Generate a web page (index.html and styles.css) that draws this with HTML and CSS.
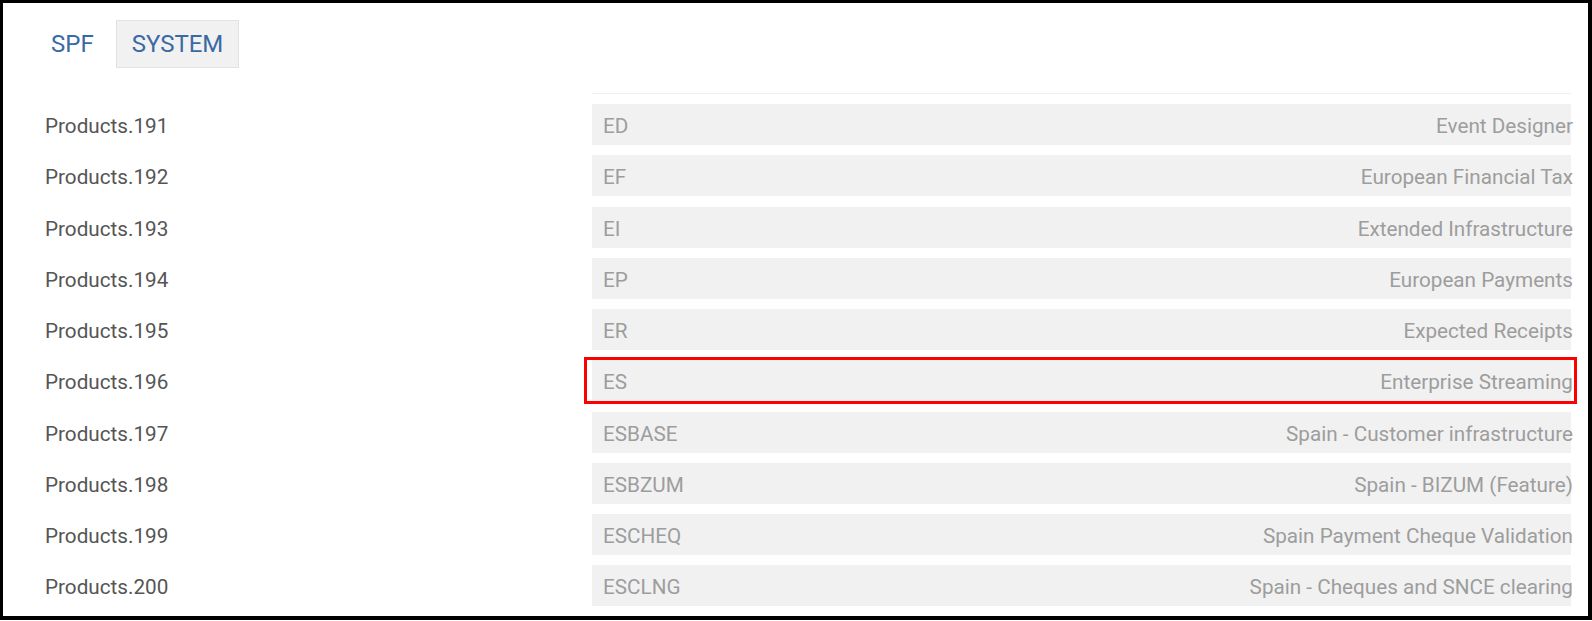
FILE: index.html
```html
<!DOCTYPE html>
<html>
<head>
<meta charset="utf-8">
<link rel="stylesheet" href="styles.css">
</head>
<body>
<div class="frame">
  <div class="header">
    <span class="crumb">SPF</span>
    <span class="crumb-btn">SYSTEM</span>
  </div>
  <div class="table">
    <div class="head-row"><div></div><div class="head-line"></div></div>
    <div class="row"><div class="name">Products.191</div><div class="cell"><span class="code">ED</span><span class="desc">Event Designer</span></div></div>
    <div class="row"><div class="name">Products.192</div><div class="cell"><span class="code">EF</span><span class="desc">European Financial Tax</span></div></div>
    <div class="row"><div class="name">Products.193</div><div class="cell"><span class="code">EI</span><span class="desc">Extended Infrastructure</span></div></div>
    <div class="row"><div class="name">Products.194</div><div class="cell"><span class="code">EP</span><span class="desc">European Payments</span></div></div>
    <div class="row"><div class="name">Products.195</div><div class="cell"><span class="code">ER</span><span class="desc">Expected Receipts</span></div></div>
    <div class="row"><div class="name">Products.196</div><div class="cell highlighted"><span class="code">ES</span><span class="desc">Enterprise Streaming</span></div></div>
    <div class="row"><div class="name">Products.197</div><div class="cell"><span class="code">ESBASE</span><span class="desc">Spain - Customer infrastructure</span></div></div>
    <div class="row"><div class="name">Products.198</div><div class="cell"><span class="code">ESBZUM</span><span class="desc">Spain - BIZUM (Feature)</span></div></div>
    <div class="row"><div class="name">Products.199</div><div class="cell"><span class="code">ESCHEQ</span><span class="desc">Spain Payment Cheque Validation</span></div></div>
    <div class="row"><div class="name">Products.200</div><div class="cell"><span class="code">ESCLNG</span><span class="desc">Spain - Cheques and SNCE clearing</span></div></div>
  </div>
</div>
</body>
</html>
```
FILE: styles.css
```css
html, body {
  margin: 0;
  padding: 0;
  background: #ffffff;
}
body {
  font-family: Roboto, "Liberation Sans", sans-serif;
}
.frame {
  box-sizing: border-box;
  width: 1592px;
  height: 620px;
  border-style: solid;
  border-color: #000;
  border-width: 3px 4px 4px 3px;
  padding: 17px 0 0 0;
  overflow: hidden;
}
.header {
  display: flex;
  align-items: center;
  gap: 22px;
  padding-left: 48px;
  height: 48px;
}
.crumb {
  color: #3a6aa3;
  font-size: 24px;
  line-height: 28px;
}
.crumb-btn {
  box-sizing: border-box;
  color: #3a6aa3;
  font-size: 24px;
  line-height: 28px;
  padding: 9px 15px;
  height: 48px;
  background: #f1f1f1;
  border: 1px solid #e2e2e2;
}
.table {
  padding-left: 42px;
  margin-top: 25px;
}
.head-row {
  display: grid;
  grid-template-columns: 547px 979px;
  margin-bottom: 10px;
}
.head-line {
  height: 1px;
  background: #eeeeee;
}
.row {
  display: grid;
  grid-template-columns: 547px 979px;
  height: 41px;
  margin-bottom: 10.25px;
}
.name {
  box-sizing: border-box;
  padding-top: 4px;
  line-height: 37px;
  font-size: 20.7px;
  color: #555555;
}
.cell {
  position: relative;
  box-sizing: border-box;
  display: flex;
  justify-content: space-between;
  background: #f1f1f1;
  padding: 4px 0 0 11px;
  line-height: 37px;
  font-size: 20.7px;
  color: #9d9d9d;
}
.desc {
  margin-right: -2px;
  white-space: nowrap;
}
.highlighted::after {
  content: "";
  position: absolute;
  left: -8px;
  right: -6px;
  top: -3px;
  bottom: -3px;
  border: 3px solid #ff0000;
}
```
